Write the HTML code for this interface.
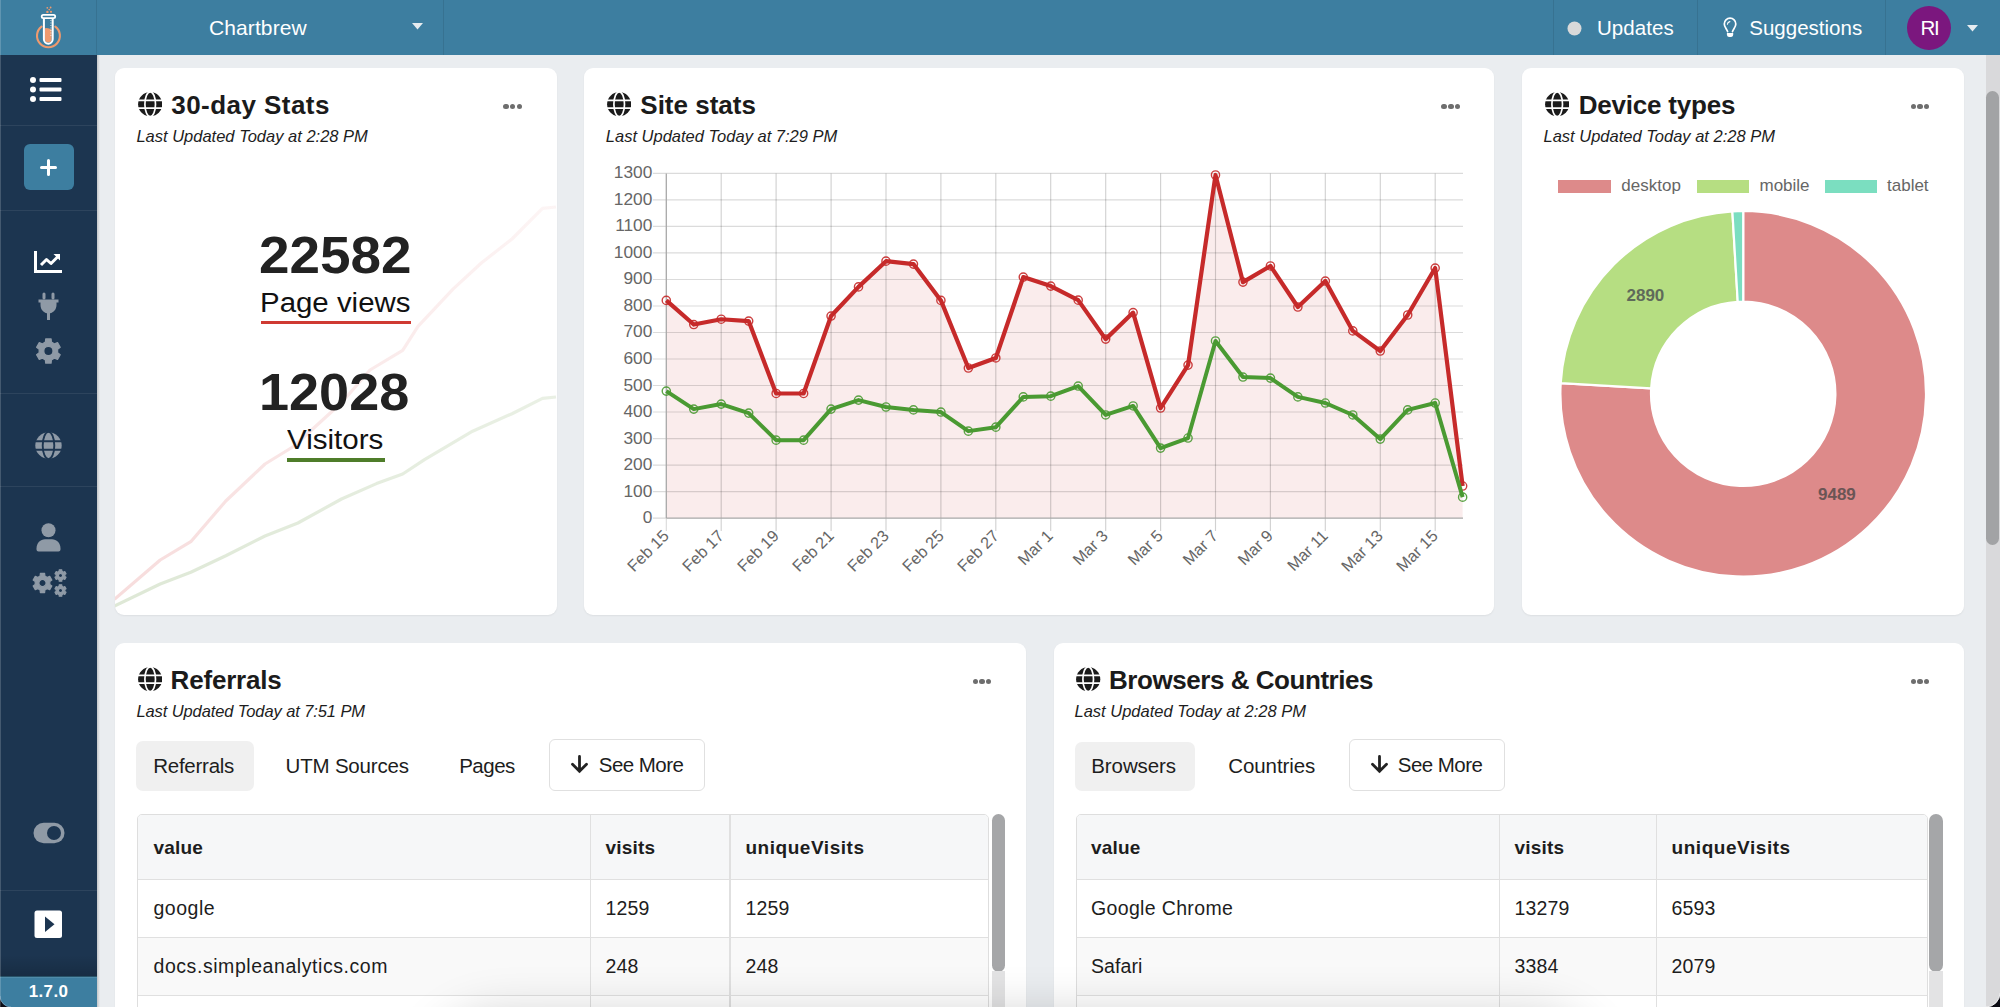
<!DOCTYPE html>
<html><head><meta charset="utf-8">
<style>
*{margin:0;padding:0;box-sizing:border-box}
html,body{width:2000px;height:1007px;overflow:hidden;background:#1e2a35}
body{font-family:"Liberation Sans",sans-serif;position:relative;color:#1a1a1a}
.a{position:absolute}
.t{position:absolute;line-height:1;white-space:nowrap}
#hdr{left:0;top:0;width:2000px;height:55px;background:#3d7ea0}
#hdr .dv{position:absolute;top:0;width:1px;height:55px;background:rgba(0,0,0,0.09)}
#side{left:0;top:55px;width:97px;height:952px;background:#1c3550;overflow:hidden}
#side .dv{position:absolute;left:0;width:97px;height:1px;background:rgba(255,255,255,0.08)}
#main{left:97px;top:55px;width:1889px;height:952px;background:#eaedf0}
.card{position:absolute;background:#fff;border-radius:9px;box-shadow:0 1px 2px rgba(0,0,0,0.06)}
.ttl{font-weight:bold;font-size:26px;color:#1b1b1b}
.upd{font-style:italic;font-size:16.5px;color:#1d1d1d}
.dots{position:absolute;width:18px;height:6px}
.dots i{position:absolute;top:0;width:5.5px;height:5.5px;border-radius:50%;background:#6e6e6e}
.ax{font-size:17px;color:#666}
.tab{position:absolute;height:50px;border-radius:7px}
.tabt{font-size:20.5px;color:#1d1d1d;letter-spacing:-0.4px}
.tbl{position:absolute;border:1px solid #dedede;border-radius:5px;overflow:hidden}
.th{font-weight:bold;font-size:19px;color:#1d1d1d;letter-spacing:0.2px}
.td{font-size:19.5px;color:#1d1d1d;letter-spacing:0.2px}
</style></head><body>
<div id="hdr" class="a">
<div class="dv" style="left:96px"></div>
<div class="dv" style="left:443px"></div>
<div class="dv" style="left:1553px"></div>
<div class="dv" style="left:1697px"></div>
<div class="dv" style="left:1885px"></div>
</div>
<svg class="a" style="left:0;top:0" width="97" height="55" viewBox="0 0 97 55">
<path d="M41.6 26.6 A11.45 11.45 0 1 0 55.3 26.6" fill="none" stroke="#ef9a6e" stroke-width="2.1" stroke-linecap="round"/>
<path d="M45 28.2 Q48.5 27.6 51.6 29.6 V39.3 A3.3 3.3 0 0 1 45 39.3 Z" fill="#ef9a6e"/>
<path d="M43.9 18.2 V39.3 A4.4 4.4 0 0 0 52.7 39.3 V18.2" fill="none" stroke="#fff" stroke-width="2"/>
<rect x="41.7" y="14.9" width="13.5" height="3.2" rx="1.6" fill="none" stroke="#fff" stroke-width="1.8"/>
<path d="M50.2 20.5H51.6M50.2 23H51.6M50.2 25.5H51.6M50.2 28H51.6M50.2 30.5H51.6M50.2 33H51.6M50.2 35.5H51.6" stroke="#fff" stroke-width="0.7" opacity="0.8"/>
<circle cx="47.4" cy="11.9" r="1.2" fill="#ef9a6e"/><circle cx="51" cy="11.8" r="1.1" fill="#ef9a6e"/><circle cx="49.2" cy="9.6" r="0.8" fill="#ef9a6e"/><circle cx="47.3" cy="7.8" r="0.9" fill="#ef9a6e"/><circle cx="50.6" cy="7.5" r="0.9" fill="#ef9a6e"/>
</svg>
<div class="t " style="left:209.0px;top:16.5px;font-size:21px;color:#fff;letter-spacing:0.1px">Chartbrew</div>
<svg class="a" style="left:412px;top:23px" width="11" height="7" viewBox="0 0 11 7"><path d="M0 0H11L5.5 6.5Z" fill="#e6ecf0"/></svg>
<svg class="a" style="left:1567px;top:20.5px" width="15" height="15"><circle cx="7.5" cy="7.5" r="7" fill="#d9d9d9"/></svg>
<div class="t " style="left:1597.0px;top:17.6px;font-size:20.5px;color:#fff;letter-spacing:0.05px">Updates</div>
<svg class="a" style="left:1720px;top:15px" width="20" height="24" viewBox="0 0 20 24"><path d="M7.6 16.6 C6.8 14 4.3 12.2 4.3 8.9 A5.75 5.75 0 0 1 15.8 8.9 C15.8 12.2 13.3 14 12.5 16.6" fill="none" stroke="#fff" stroke-width="1.7" stroke-linecap="round"/><path d="M7.4 9.3 A3 3 0 0 1 9.9 6.6" fill="none" stroke="#fff" stroke-width="1.1" stroke-linecap="round"/><path d="M6.9 18.1H13.2V19.8Q13.2 21.9 11.2 21.9H8.9Q6.9 21.9 6.9 19.8Z" fill="#fff"/></svg>
<div class="t " style="left:1749.3px;top:17.6px;font-size:20.5px;color:#fff;letter-spacing:0.0px">Suggestions</div>
<div class="a" style="left:1907px;top:5.5px;width:44.4px;height:44.4px;border-radius:50%;background:#7b177e"></div>
<div class="t " style="left:1913.5px;top:17.6px;font-size:20.5px;color:#fff;width:32px;text-align:center;letter-spacing:-1.2px">RI</div>
<svg class="a" style="left:1967px;top:24.5px" width="11" height="7" viewBox="0 0 11 7"><path d="M0 0H11L5.5 6.5Z" fill="#e6ecf0"/></svg>
<div id="side" class="a">
<div class="dv" style="top:70px"></div>
<div class="dv" style="top:155px"></div>
<div class="dv" style="top:338px"></div>
<div class="dv" style="top:431px"></div>
<div class="dv" style="top:835px"></div>
<div class="a" style="left:0;top:921px;width:97px;height:31px;background:#3d7ea0"></div>
<div class="t" style="left:0;top:928px;width:97px;text-align:center;font-size:17px;font-weight:bold;color:#fff;letter-spacing:0.3px">1.7.0</div>
</div>
<svg class="a" style="left:29px;top:76px" width="34" height="27" viewBox="0 0 34 27"><circle cx="4" cy="4" r="3" fill="#fff"/><circle cx="4" cy="13.5" r="3" fill="#fff"/><circle cx="4" cy="23" r="3" fill="#fff"/><rect x="10.5" y="2" width="22" height="4" rx="1" fill="#fff"/><rect x="10.5" y="11.5" width="22" height="4" rx="1" fill="#fff"/><rect x="10.5" y="21" width="22" height="4" rx="1" fill="#fff"/></svg>
<div class="a" style="left:23.5px;top:144px;width:50px;height:46px;border-radius:6px;background:#3d7ea0"></div>
<svg class="a" style="left:40px;top:158.5px" width="17" height="17"><path d="M8.5 1.5V15.5M1.5 8.5H15.5" stroke="#fff" stroke-width="3" stroke-linecap="round"/></svg>
<svg class="a" style="left:34px;top:251px" width="29" height="22" viewBox="0 0 29 22"><path d="M1.5 0V20.5H28" fill="none" stroke="#fff" stroke-width="3"/><path d="M7 14L12.5 8.5L17 12.5L24 5.5" fill="none" stroke="#fff" stroke-width="3" stroke-linejoin="round"/><path d="M19.5 3H26V9.5Z" fill="#fff"/></svg>
<svg class="a" style="left:38px;top:292px" width="21" height="29" viewBox="0 0 21 29"><rect x="4.5" y="0.5" width="3" height="7" rx="1.5" fill="#8f9aa6"/><rect x="13.5" y="0.5" width="3" height="7" rx="1.5" fill="#8f9aa6"/><path d="M0.5 7.5H20.5V10.5H18.5V13C18.5 17.5 15.5 20.5 12 21.3V28H9V21.3C5.5 20.5 2.5 17.5 2.5 13V10.5H0.5Z" fill="#8f9aa6"/></svg>
<svg class="a" style="left:0;top:0" width="97" height="1007"><path d="M45.70 338.90 L51.10 338.90 L51.42 342.07 L54.62 343.92 L57.53 342.61 L60.23 347.29 L57.64 349.15 L57.64 352.85 L60.23 354.71 L57.53 359.39 L54.62 358.08 L51.42 359.93 L51.10 363.10 L45.70 363.10 L45.38 359.93 L42.18 358.08 L39.27 359.39 L36.57 354.71 L39.16 352.85 L39.16 349.15 L36.57 347.29 L39.27 342.61 L42.18 343.92 L45.38 342.07Z M53.00 351.00 A4.6 4.6 0 1 0 43.80 351.00 A4.6 4.6 0 1 0 53.00 351.00Z" fill="#8f9aa6" fill-rule="evenodd" stroke="#8f9aa6" stroke-width="1.2" stroke-linejoin="round"/><path d="M40.36 573.44 L44.64 573.44 L44.88 575.94 L47.42 577.41 L49.71 576.37 L51.85 580.07 L49.80 581.54 L49.80 584.46 L51.85 585.93 L49.71 589.63 L47.42 588.59 L44.88 590.06 L44.64 592.56 L40.36 592.56 L40.12 590.06 L37.58 588.59 L35.29 589.63 L33.15 585.93 L35.20 584.46 L35.20 581.54 L33.15 580.07 L35.29 576.37 L37.58 577.41 L40.12 575.94Z M46.10 583.00 A3.6 3.6 0 1 0 38.90 583.00 A3.6 3.6 0 1 0 46.10 583.00Z" fill="#8f9aa6" fill-rule="evenodd" stroke="#8f9aa6" stroke-width="1.2" stroke-linejoin="round"/><path d="M59.23 569.84 L61.77 569.84 L61.91 571.32 L63.41 572.19 L64.77 571.57 L66.03 573.77 L64.82 574.63 L64.82 576.37 L66.03 577.23 L64.77 579.43 L63.41 578.81 L61.91 579.68 L61.77 581.16 L59.23 581.16 L59.09 579.68 L57.59 578.81 L56.23 579.43 L54.97 577.23 L56.18 576.37 L56.18 574.63 L54.97 573.77 L56.23 571.57 L57.59 572.19 L59.09 571.32Z M62.60 575.50 A2.1 2.1 0 1 0 58.40 575.50 A2.1 2.1 0 1 0 62.60 575.50Z" fill="#8f9aa6" fill-rule="evenodd" stroke="#8f9aa6" stroke-width="1.2" stroke-linejoin="round"/><path d="M59.23 584.84 L61.77 584.84 L61.91 586.32 L63.41 587.19 L64.77 586.57 L66.03 588.77 L64.82 589.63 L64.82 591.37 L66.03 592.23 L64.77 594.43 L63.41 593.81 L61.91 594.68 L61.77 596.16 L59.23 596.16 L59.09 594.68 L57.59 593.81 L56.23 594.43 L54.97 592.23 L56.18 591.37 L56.18 589.63 L54.97 588.77 L56.23 586.57 L57.59 587.19 L59.09 586.32Z M62.60 590.50 A2.1 2.1 0 1 0 58.40 590.50 A2.1 2.1 0 1 0 62.60 590.50Z" fill="#8f9aa6" fill-rule="evenodd" stroke="#8f9aa6" stroke-width="1.2" stroke-linejoin="round"/></svg>
<svg class="a" style="left:35px;top:432px" width="27" height="27" viewBox="-13.5 -13.5 27 27"><circle r="13.2" fill="#8f9aa6"/><ellipse rx="5.8" ry="13.6" fill="none" stroke="#1c3550" stroke-width="1.9"/><path d="M-14 -4.2H14M-14 4.2H14" stroke="#1c3550" stroke-width="1.9"/></svg>
<svg class="a" style="left:36px;top:523px" width="25" height="29" viewBox="0 0 25 29"><circle cx="12.5" cy="7.3" r="7" fill="#8f9aa6"/><path d="M0.5 25.5C0.5 20 4.5 16.3 9 16.3H16C20.5 16.3 24.5 20 24.5 25.5V26.5C24.5 27.6 23.6 28.5 22.5 28.5H2.5C1.4 28.5 0.5 27.6 0.5 26.5Z" fill="#8f9aa6"/></svg>
<svg class="a" style="left:33px;top:822px" width="32" height="22" viewBox="0 0 32 22"><rect x="0.5" y="0.8" width="31" height="20.4" rx="10.2" fill="#8f9aa6"/><circle cx="21" cy="11" r="7" fill="#1c3550"/></svg>
<svg class="a" style="left:34px;top:910px" width="29" height="29" viewBox="0 0 29 29"><rect x="0.5" y="0.5" width="27.5" height="27.5" rx="2.5" fill="#fff"/><path d="M11 6.5L20.5 14.2L11 22Z" fill="#1c3550"/></svg>
<div id="main" class="a"></div>
<div class="card" style="left:115px;top:68px;width:442px;height:547px"></div>
<div class="card" style="left:584px;top:68px;width:910px;height:547px"></div>
<div class="card" style="left:1522px;top:68px;width:442px;height:547px"></div>
<div class="card" style="left:115px;top:643px;width:911px;height:400px"></div>
<div class="card" style="left:1054px;top:643px;width:910px;height:400px"></div>
<div class="a" style="left:97px;top:55px;width:3px;height:952px;background:linear-gradient(90deg,rgba(0,0,0,0.17),rgba(0,0,0,0))"></div>
<div class="a" style="left:1986px;top:55px;width:14px;height:952px;background:#d9d9db"></div>
<div class="a" style="left:1986px;top:91px;width:13px;height:454px;background:#a2a3a5;border-radius:7px"></div>
<svg class="a" style="left:138px;top:92px" width="24.4" height="24.4" viewBox="-12.2 -12.2 24.4 24.4"><circle r="12.1" fill="#1b1b1b"/><ellipse rx="5.3" ry="12.4" fill="none" stroke="#fff" stroke-width="1.7"/><path d="M-13 -3.85H13M-13 3.85H13" stroke="#fff" stroke-width="1.7"/></svg>
<div class="t ttl" style="left:171.3px;top:91.9px;font-size:26px;letter-spacing:0.45px">30-day Stats</div>
<div class="dots" style="left:503.2px;top:103.7px"><i style="left:0"></i><i style="left:6.7px"></i><i style="left:13.4px"></i></div>
<div class="t upd" style="left:136.4px;top:128.2px;font-size:16.5px;">Last Updated Today at 2:28 PM</div>
<svg class="a" style="left:607px;top:92px" width="24.4" height="24.4" viewBox="-12.2 -12.2 24.4 24.4"><circle r="12.1" fill="#1b1b1b"/><ellipse rx="5.3" ry="12.4" fill="none" stroke="#fff" stroke-width="1.7"/><path d="M-13 -3.85H13M-13 3.85H13" stroke="#fff" stroke-width="1.7"/></svg>
<div class="t ttl" style="left:640.3px;top:91.9px;font-size:26px;">Site stats</div>
<div class="dots" style="left:1441.4px;top:103.7px"><i style="left:0"></i><i style="left:6.7px"></i><i style="left:13.4px"></i></div>
<div class="t upd" style="left:605.8px;top:128.2px;font-size:16.5px;">Last Updated Today at 7:29 PM</div>
<svg class="a" style="left:1545px;top:92px" width="24.4" height="24.4" viewBox="-12.2 -12.2 24.4 24.4"><circle r="12.1" fill="#1b1b1b"/><ellipse rx="5.3" ry="12.4" fill="none" stroke="#fff" stroke-width="1.7"/><path d="M-13 -3.85H13M-13 3.85H13" stroke="#fff" stroke-width="1.7"/></svg>
<div class="t ttl" style="left:1578.7px;top:91.9px;font-size:26px;letter-spacing:-0.2px">Device types</div>
<div class="dots" style="left:1910.5px;top:103.7px"><i style="left:0"></i><i style="left:6.7px"></i><i style="left:13.4px"></i></div>
<div class="t upd" style="left:1543.5px;top:128.2px;font-size:16.5px;">Last Updated Today at 2:28 PM</div>
<svg class="a" style="left:138px;top:667px" width="24.4" height="24.4" viewBox="-12.2 -12.2 24.4 24.4"><circle r="12.1" fill="#1b1b1b"/><ellipse rx="5.3" ry="12.4" fill="none" stroke="#fff" stroke-width="1.7"/><path d="M-13 -3.85H13M-13 3.85H13" stroke="#fff" stroke-width="1.7"/></svg>
<div class="t ttl" style="left:170.6px;top:667.3px;font-size:26px;letter-spacing:-0.2px">Referrals</div>
<div class="dots" style="left:972.5px;top:678.5px"><i style="left:0"></i><i style="left:6.7px"></i><i style="left:13.4px"></i></div>
<div class="t upd" style="left:136.4px;top:703.3px;font-size:16.5px;letter-spacing:-0.1px">Last Updated Today at 7:51 PM</div>
<svg class="a" style="left:1076.2px;top:667px" width="24.4" height="24.4" viewBox="-12.2 -12.2 24.4 24.4"><circle r="12.1" fill="#1b1b1b"/><ellipse rx="5.3" ry="12.4" fill="none" stroke="#fff" stroke-width="1.7"/><path d="M-13 -3.85H13M-13 3.85H13" stroke="#fff" stroke-width="1.7"/></svg>
<div class="t ttl" style="left:1109.0px;top:667.3px;font-size:26px;letter-spacing:-0.45px">Browsers &amp; Countries</div>
<div class="dots" style="left:1910.5px;top:678.5px"><i style="left:0"></i><i style="left:6.7px"></i><i style="left:13.4px"></i></div>
<div class="t upd" style="left:1074.5px;top:703.3px;font-size:16.5px;">Last Updated Today at 2:28 PM</div>
<svg class="a" style="left:0;top:0" width="2000" height="1007"><path d="M666.30 518.1 L666.30 300.41 L693.76 324.54 L721.22 319.23 L748.68 321.09 L776.14 393.48 L803.60 393.48 L831.06 316.05 L858.52 286.89 L885.98 261.17 L913.44 264.08 L940.90 300.41 L968.36 368.02 L995.82 357.95 L1023.28 277.08 L1050.74 286.09 L1078.20 300.14 L1105.66 339.12 L1133.12 312.61 L1160.58 408.06 L1188.04 365.11 L1215.50 174.99 L1242.96 282.11 L1270.42 265.94 L1297.88 307.04 L1325.34 281.05 L1352.80 330.90 L1380.26 351.05 L1407.72 314.99 L1435.18 268.06 L1462.64 486.02 L1462.64 518.1Z" fill="rgba(200,40,40,0.09)"/><path d="M653 491.6H1463 M653 465.1H1463 M653 438.6H1463 M653 412.0H1463 M653 385.5H1463 M653 359.0H1463 M653 332.5H1463 M653 306.0H1463 M653 279.5H1463 M653 252.9H1463 M653 226.4H1463 M653 199.9H1463 M653 173.4H1463" stroke="rgba(0,0,0,0.14)" stroke-width="1.15" fill="none"/><path d="M721.2 173.4V531 M776.1 173.4V531 M831.1 173.4V531 M886.0 173.4V531 M940.9 173.4V531 M995.8 173.4V531 M1050.7 173.4V531 M1105.7 173.4V531 M1160.6 173.4V531 M1215.5 173.4V531 M1270.4 173.4V531 M1325.3 173.4V531 M1380.3 173.4V531 M1435.2 173.4V531" stroke="rgba(0,0,0,0.18)" stroke-width="1.15" fill="none"/><path d="M653 518.1H666.3M666.3 518.1V531" stroke="#dadada" stroke-width="1.1" fill="none"/><path d="M666.3 518.1H1463M666.3 173.4V518.1" stroke="#a8a8a8" stroke-width="1.3" fill="none"/><path d="M666.30 300.41 L693.76 324.54 L721.22 319.23 L748.68 321.09 L776.14 393.48 L803.60 393.48 L831.06 316.05 L858.52 286.89 L885.98 261.17 L913.44 264.08 L940.90 300.41 L968.36 368.02 L995.82 357.95 L1023.28 277.08 L1050.74 286.09 L1078.20 300.14 L1105.66 339.12 L1133.12 312.61 L1160.58 408.06 L1188.04 365.11 L1215.50 174.99 L1242.96 282.11 L1270.42 265.94 L1297.88 307.04 L1325.34 281.05 L1352.80 330.90 L1380.26 351.05 L1407.72 314.99 L1435.18 268.06 L1462.64 486.02" stroke="#c62a2a" stroke-width="4.2" fill="none" stroke-linejoin="round"/><g fill="none" stroke="#c62a2a" stroke-width="1.4" opacity="0.9"><circle cx="666.30" cy="300.41" r="4.1"/><circle cx="693.76" cy="324.54" r="4.1"/><circle cx="721.22" cy="319.23" r="4.1"/><circle cx="748.68" cy="321.09" r="4.1"/><circle cx="776.14" cy="393.48" r="4.1"/><circle cx="803.60" cy="393.48" r="4.1"/><circle cx="831.06" cy="316.05" r="4.1"/><circle cx="858.52" cy="286.89" r="4.1"/><circle cx="885.98" cy="261.17" r="4.1"/><circle cx="913.44" cy="264.08" r="4.1"/><circle cx="940.90" cy="300.41" r="4.1"/><circle cx="968.36" cy="368.02" r="4.1"/><circle cx="995.82" cy="357.95" r="4.1"/><circle cx="1023.28" cy="277.08" r="4.1"/><circle cx="1050.74" cy="286.09" r="4.1"/><circle cx="1078.20" cy="300.14" r="4.1"/><circle cx="1105.66" cy="339.12" r="4.1"/><circle cx="1133.12" cy="312.61" r="4.1"/><circle cx="1160.58" cy="408.06" r="4.1"/><circle cx="1188.04" cy="365.11" r="4.1"/><circle cx="1215.50" cy="174.99" r="4.1"/><circle cx="1242.96" cy="282.11" r="4.1"/><circle cx="1270.42" cy="265.94" r="4.1"/><circle cx="1297.88" cy="307.04" r="4.1"/><circle cx="1325.34" cy="281.05" r="4.1"/><circle cx="1352.80" cy="330.90" r="4.1"/><circle cx="1380.26" cy="351.05" r="4.1"/><circle cx="1407.72" cy="314.99" r="4.1"/><circle cx="1435.18" cy="268.06" r="4.1"/><circle cx="1462.64" cy="486.02" r="4.1"/></g><path d="M666.30 391.09 L693.76 409.12 L721.22 404.08 L748.68 413.10 L776.14 440.14 L803.60 440.14 L831.06 409.12 L858.52 400.11 L885.98 407.00 L913.44 409.92 L940.90 412.04 L968.36 431.13 L995.82 427.15 L1023.28 396.92 L1050.74 396.13 L1078.20 386.05 L1105.66 414.96 L1133.12 405.94 L1160.58 448.10 L1188.04 438.02 L1215.50 340.98 L1242.96 377.04 L1270.42 378.10 L1297.88 396.92 L1325.34 403.02 L1352.80 414.96 L1380.26 439.08 L1407.72 409.92 L1435.18 403.02 L1462.64 497.15" stroke="#4a9a32" stroke-width="4.0" fill="none" stroke-linejoin="round"/><g fill="none" stroke="#4a9a32" stroke-width="1.4" opacity="0.9"><circle cx="666.30" cy="391.09" r="4.1"/><circle cx="693.76" cy="409.12" r="4.1"/><circle cx="721.22" cy="404.08" r="4.1"/><circle cx="748.68" cy="413.10" r="4.1"/><circle cx="776.14" cy="440.14" r="4.1"/><circle cx="803.60" cy="440.14" r="4.1"/><circle cx="831.06" cy="409.12" r="4.1"/><circle cx="858.52" cy="400.11" r="4.1"/><circle cx="885.98" cy="407.00" r="4.1"/><circle cx="913.44" cy="409.92" r="4.1"/><circle cx="940.90" cy="412.04" r="4.1"/><circle cx="968.36" cy="431.13" r="4.1"/><circle cx="995.82" cy="427.15" r="4.1"/><circle cx="1023.28" cy="396.92" r="4.1"/><circle cx="1050.74" cy="396.13" r="4.1"/><circle cx="1078.20" cy="386.05" r="4.1"/><circle cx="1105.66" cy="414.96" r="4.1"/><circle cx="1133.12" cy="405.94" r="4.1"/><circle cx="1160.58" cy="448.10" r="4.1"/><circle cx="1188.04" cy="438.02" r="4.1"/><circle cx="1215.50" cy="340.98" r="4.1"/><circle cx="1242.96" cy="377.04" r="4.1"/><circle cx="1270.42" cy="378.10" r="4.1"/><circle cx="1297.88" cy="396.92" r="4.1"/><circle cx="1325.34" cy="403.02" r="4.1"/><circle cx="1352.80" cy="414.96" r="4.1"/><circle cx="1380.26" cy="439.08" r="4.1"/><circle cx="1407.72" cy="409.92" r="4.1"/><circle cx="1435.18" cy="403.02" r="4.1"/><circle cx="1462.64" cy="497.15" r="4.1"/></g></svg>
<div class="t ax" style="left:600.0px;top:509.0px;font-size:17.3px;width:52.3px;text-align:right">0</div>
<div class="t ax" style="left:600.0px;top:482.5px;font-size:17.3px;width:52.3px;text-align:right">100</div>
<div class="t ax" style="left:600.0px;top:456.0px;font-size:17.3px;width:52.3px;text-align:right">200</div>
<div class="t ax" style="left:600.0px;top:429.5px;font-size:17.3px;width:52.3px;text-align:right">300</div>
<div class="t ax" style="left:600.0px;top:403.0px;font-size:17.3px;width:52.3px;text-align:right">400</div>
<div class="t ax" style="left:600.0px;top:376.5px;font-size:17.3px;width:52.3px;text-align:right">500</div>
<div class="t ax" style="left:600.0px;top:350.0px;font-size:17.3px;width:52.3px;text-align:right">600</div>
<div class="t ax" style="left:600.0px;top:323.4px;font-size:17.3px;width:52.3px;text-align:right">700</div>
<div class="t ax" style="left:600.0px;top:296.9px;font-size:17.3px;width:52.3px;text-align:right">800</div>
<div class="t ax" style="left:600.0px;top:270.4px;font-size:17.3px;width:52.3px;text-align:right">900</div>
<div class="t ax" style="left:600.0px;top:243.9px;font-size:17.3px;width:52.3px;text-align:right">1000</div>
<div class="t ax" style="left:600.0px;top:217.4px;font-size:17.3px;width:52.3px;text-align:right">1100</div>
<div class="t ax" style="left:600.0px;top:190.9px;font-size:17.3px;width:52.3px;text-align:right">1200</div>
<div class="t ax" style="left:600.0px;top:164.3px;font-size:17.3px;width:52.3px;text-align:right">1300</div>
<div class="t ax" style="font-size:16.3px;left:460.0px;top:527.2px;width:200px;text-align:right;transform-origin:100% 0;transform:rotate(-45deg) translate(0px,0px)">Feb 15</div>
<div class="t ax" style="font-size:16.3px;left:514.9px;top:527.2px;width:200px;text-align:right;transform-origin:100% 0;transform:rotate(-45deg) translate(0px,0px)">Feb 17</div>
<div class="t ax" style="font-size:16.3px;left:569.8px;top:527.2px;width:200px;text-align:right;transform-origin:100% 0;transform:rotate(-45deg) translate(0px,0px)">Feb 19</div>
<div class="t ax" style="font-size:16.3px;left:624.8px;top:527.2px;width:200px;text-align:right;transform-origin:100% 0;transform:rotate(-45deg) translate(0px,0px)">Feb 21</div>
<div class="t ax" style="font-size:16.3px;left:679.7px;top:527.2px;width:200px;text-align:right;transform-origin:100% 0;transform:rotate(-45deg) translate(0px,0px)">Feb 23</div>
<div class="t ax" style="font-size:16.3px;left:734.6px;top:527.2px;width:200px;text-align:right;transform-origin:100% 0;transform:rotate(-45deg) translate(0px,0px)">Feb 25</div>
<div class="t ax" style="font-size:16.3px;left:789.5px;top:527.2px;width:200px;text-align:right;transform-origin:100% 0;transform:rotate(-45deg) translate(0px,0px)">Feb 27</div>
<div class="t ax" style="font-size:16.3px;left:844.4px;top:527.2px;width:200px;text-align:right;transform-origin:100% 0;transform:rotate(-45deg) translate(0px,0px)">Mar 1</div>
<div class="t ax" style="font-size:16.3px;left:899.4px;top:527.2px;width:200px;text-align:right;transform-origin:100% 0;transform:rotate(-45deg) translate(0px,0px)">Mar 3</div>
<div class="t ax" style="font-size:16.3px;left:954.3px;top:527.2px;width:200px;text-align:right;transform-origin:100% 0;transform:rotate(-45deg) translate(0px,0px)">Mar 5</div>
<div class="t ax" style="font-size:16.3px;left:1009.2px;top:527.2px;width:200px;text-align:right;transform-origin:100% 0;transform:rotate(-45deg) translate(0px,0px)">Mar 7</div>
<div class="t ax" style="font-size:16.3px;left:1064.1px;top:527.2px;width:200px;text-align:right;transform-origin:100% 0;transform:rotate(-45deg) translate(0px,0px)">Mar 9</div>
<div class="t ax" style="font-size:16.3px;left:1119.0px;top:527.2px;width:200px;text-align:right;transform-origin:100% 0;transform:rotate(-45deg) translate(0px,0px)">Mar 11</div>
<div class="t ax" style="font-size:16.3px;left:1174.0px;top:527.2px;width:200px;text-align:right;transform-origin:100% 0;transform:rotate(-45deg) translate(0px,0px)">Mar 13</div>
<div class="t ax" style="font-size:16.3px;left:1228.9px;top:527.2px;width:200px;text-align:right;transform-origin:100% 0;transform:rotate(-45deg) translate(0px,0px)">Mar 15</div>
<svg class="a" style="left:0;top:0" width="2000" height="1007"><path d="M1743.20 211.00A182.8 182.8 0 1 1 1560.71 383.12L1651.16 388.41A92.2 92.2 0 1 0 1743.20 301.60Z" fill="#dd8a8a" stroke="#fff" stroke-width="2.2" stroke-linejoin="round"/><path d="M1560.71 383.12A182.8 182.8 0 0 1 1732.36 211.32L1737.73 301.76A92.2 92.2 0 0 0 1651.16 388.41Z" fill="#b6de82" stroke="#fff" stroke-width="2.2" stroke-linejoin="round"/><path d="M1732.36 211.32A182.8 182.8 0 0 1 1743.20 211.00L1743.20 301.60A92.2 92.2 0 0 0 1737.73 301.76Z" fill="#7bdec0" stroke="#fff" stroke-width="2.2" stroke-linejoin="round"/></svg>
<div class="t " style="left:1626.5px;top:287.1px;font-size:17px;font-weight:bold;color:#5f6a5a">2890</div>
<div class="t " style="left:1818.0px;top:485.6px;font-size:17px;font-weight:bold;color:#6b5555">9489</div>
<div class="a" style="left:1558.3px;top:179.5px;width:52.5px;height:13.2px;background:#dd8a8a"></div>
<div class="a" style="left:1696.5px;top:179.5px;width:52.5px;height:13.2px;background:#b6de82"></div>
<div class="a" style="left:1824.5px;top:179.5px;width:52.5px;height:13.2px;background:#7bdec0"></div>
<div class="t ax" style="left:1621.3px;top:177.1px;font-size:17px;">desktop</div>
<div class="t ax" style="left:1759.5px;top:177.1px;font-size:17px;">mobile</div>
<div class="t ax" style="left:1887.0px;top:177.1px;font-size:17px;">tablet</div>
<svg class="a" style="left:0;top:0" width="2000" height="1007"><defs><clipPath id="c1"><rect x="115" y="68" width="442" height="547" rx="9"/></clipPath></defs><linearGradient id="gr" gradientUnits="userSpaceOnUse" x1="0" y1="600" x2="0" y2="207"><stop offset="0" stop-color="rgb(215,80,80)" stop-opacity="0.2"/><stop offset="1" stop-color="rgb(215,80,80)" stop-opacity="0.06"/></linearGradient><linearGradient id="gg" gradientUnits="userSpaceOnUse" x1="0" y1="606" x2="0" y2="397"><stop offset="0" stop-color="rgb(90,140,50)" stop-opacity="0.2"/><stop offset="1" stop-color="rgb(90,140,50)" stop-opacity="0.13"/></linearGradient><g clip-path="url(#c1)" fill="none" stroke-width="3.2" stroke-linejoin="round"><path d="M114.4 599.4 L160.2 560.0 L190.8 541.7 L225.8 501.0 L265.0 464.0 L293.5 446.5 L341.5 402.8 L370.0 370.0 L402.7 350.4 L418.0 326.4 L453.0 289.2 L481.3 263.0 L512.0 239.0 L542.5 208.4 L556.0 207.0" stroke="url(#gr)"/><path d="M114.4 606.0 L160.2 584.0 L190.8 572.3 L225.8 555.7 L265.0 536.0 L297.9 523.0 L341.5 499.0 L376.5 483.6 L402.7 474.0 L424.5 459.6 L472.6 431.2 L512.0 413.7 L542.5 398.4 L556.0 397.0" stroke="url(#gg)"/></g></svg>
<div class="t " style="left:258.9px;top:230.1px;font-size:51.6px;font-weight:bold;color:#222;transform-origin:0 0;transform:scaleX(1.063)">22582</div>
<div class="t " style="left:260.3px;top:290.1px;font-size:27px;color:#111;transform-origin:0 0;transform:scaleX(1.09)">Page views</div>
<div class="a" style="left:261px;top:320.5px;width:150px;height:3.8px;background:#cf3a32"></div>
<div class="t " style="left:259.0px;top:367.1px;font-size:51.6px;font-weight:bold;color:#222;transform-origin:0 0;transform:scaleX(1.047)">12028</div>
<div class="t " style="left:287.3px;top:426.6px;font-size:27px;color:#111;transform-origin:0 0;transform:scaleX(1.095)">Visitors</div>
<div class="a" style="left:287px;top:458.2px;width:97.5px;height:3.8px;background:#4f7d2a"></div>
<div class="a" style="left:135.9px;top:741.3px;width:118px;height:49.5px;background:#f0f0f0;border-radius:7px"></div>
<div class="t tabt" style="left:153.2px;top:756.1px;font-size:20.5px;letter-spacing:-0.25px">Referrals</div>
<div class="t tabt" style="left:285.6px;top:756.1px;font-size:20.5px;letter-spacing:-0.2px">UTM Sources</div>
<div class="t tabt" style="left:459.2px;top:756.1px;font-size:20.5px;letter-spacing:-0.5px">Pages</div>
<div class="a" style="left:548.8px;top:738.8px;width:156px;height:51.8px;border:1.6px solid #e0e0e0;border-radius:6px;background:#fff"></div>
<svg class="a" style="left:570px;top:755px" width="20" height="20" viewBox="0 0 20 20"><path d="M9.5 1.5V16.5M2.5 9.3L9.5 16.3L16.5 9.3" fill="none" stroke="#222" stroke-width="2.8" stroke-linecap="round" stroke-linejoin="miter"/></svg>
<div class="t tabt" style="left:598.8px;top:755.4px;font-size:20.5px;letter-spacing:-0.55px">See More</div>
<div class="a" style="left:1075.1px;top:741.5px;width:120.2px;height:49px;background:#f0f0f0;border-radius:7px"></div>
<div class="t tabt" style="left:1091.3px;top:756.1px;font-size:20.5px;letter-spacing:-0.1px">Browsers</div>
<div class="t tabt" style="left:1228.3px;top:756.1px;font-size:20.5px;letter-spacing:-0.1px">Countries</div>
<div class="a" style="left:1348.8px;top:738.8px;width:156px;height:51.8px;border:1.6px solid #e0e0e0;border-radius:6px;background:#fff"></div>
<svg class="a" style="left:1369.8px;top:755px" width="20" height="20" viewBox="0 0 20 20"><path d="M9.5 1.5V16.5M2.5 9.3L9.5 16.3L16.5 9.3" fill="none" stroke="#222" stroke-width="2.8" stroke-linecap="round" stroke-linejoin="miter"/></svg>
<div class="t tabt" style="left:1397.8px;top:755.4px;font-size:20.5px;letter-spacing:-0.55px">See More</div>
<div class="tbl" style="left:137px;top:814px;width:852px;height:260px;background:#fff">
<div class="a" style="left:0;top:0;width:100%;height:64px;background:#f6f7f8"></div>
<div class="a" style="left:0;top:122px;width:100%;height:58px;background:#f9f9f9"></div>
<div class="a" style="left:0;top:63.5px;width:100%;height:1.2px;background:#e0e0e0"></div>
<div class="a" style="left:0;top:121.7px;width:100%;height:1.2px;background:#e0e0e0"></div>
<div class="a" style="left:0;top:179.7px;width:100%;height:1.2px;background:#e0e0e0"></div>
<div class="a" style="left:451.5px;top:0;width:1.2px;height:100%;background:#e0e0e0"></div>
<div class="a" style="left:591.4px;top:0;width:1.2px;height:100%;background:#e0e0e0"></div>
</div>
<div class="t th" style="left:153.5px;top:838.1px;font-size:19px;">value</div>
<div class="t th" style="left:605.5px;top:838.1px;font-size:19px;">visits</div>
<div class="t th" style="left:745.4px;top:838.1px;font-size:19px;letter-spacing:0.55px">uniqueVisits</div>
<div class="t td" style="left:153.5px;top:898.7px;font-size:19.5px;letter-spacing:0.5px">google</div>
<div class="t td" style="left:605.5px;top:898.7px;font-size:19.5px;letter-spacing:0.15px">1259</div>
<div class="t td" style="left:745.4px;top:898.7px;font-size:19.5px;letter-spacing:0.15px">1259</div>
<div class="t td" style="left:153.5px;top:956.7px;font-size:19.5px;letter-spacing:0.56px">docs.simpleanalytics.com</div>
<div class="t td" style="left:605.5px;top:956.7px;font-size:19.5px;letter-spacing:0.15px">248</div>
<div class="t td" style="left:745.4px;top:956.7px;font-size:19.5px;letter-spacing:0.15px">248</div>
<div class="a" style="left:991.5px;top:814.2px;width:13.5px;height:157.5px;background:#a5a6a8;border-radius:7px"></div>
<div class="a" style="left:991.5px;top:971px;width:13.5px;height:40px;background:#e3e3e4"></div>
<div class="tbl" style="left:1075.5px;top:814px;width:852.2px;height:260px;background:#fff">
<div class="a" style="left:0;top:0;width:100%;height:64px;background:#f6f7f8"></div>
<div class="a" style="left:0;top:122px;width:100%;height:58px;background:#f9f9f9"></div>
<div class="a" style="left:0;top:63.5px;width:100%;height:1.2px;background:#e0e0e0"></div>
<div class="a" style="left:0;top:121.7px;width:100%;height:1.2px;background:#e0e0e0"></div>
<div class="a" style="left:0;top:179.7px;width:100%;height:1.2px;background:#e0e0e0"></div>
<div class="a" style="left:422.79999999999995px;top:0;width:1.2px;height:100%;background:#e0e0e0"></div>
<div class="a" style="left:579.8px;top:0;width:1.2px;height:100%;background:#e0e0e0"></div>
</div>
<div class="t th" style="left:1091.0px;top:838.1px;font-size:19px;">value</div>
<div class="t th" style="left:1514.5px;top:838.1px;font-size:19px;">visits</div>
<div class="t th" style="left:1671.5px;top:838.1px;font-size:19px;letter-spacing:0.55px">uniqueVisits</div>
<div class="t td" style="left:1091.0px;top:898.7px;font-size:19.5px;letter-spacing:0.35px">Google Chrome</div>
<div class="t td" style="left:1514.5px;top:898.7px;font-size:19.5px;letter-spacing:0.15px">13279</div>
<div class="t td" style="left:1671.5px;top:898.7px;font-size:19.5px;letter-spacing:0.15px">6593</div>
<div class="t td" style="left:1091.0px;top:956.7px;font-size:19.5px;letter-spacing:0.1px">Safari</div>
<div class="t td" style="left:1514.5px;top:956.7px;font-size:19.5px;letter-spacing:0.15px">3384</div>
<div class="t td" style="left:1671.5px;top:956.7px;font-size:19.5px;letter-spacing:0.15px">2079</div>
<div class="a" style="left:1929.3px;top:814.2px;width:13.5px;height:157.5px;background:#a5a6a8;border-radius:7px"></div>
<div class="a" style="left:1929.3px;top:971px;width:13.5px;height:40px;background:#e3e3e4"></div>
<div class="a" style="left:0;top:0;width:2000px;height:1007px;overflow:hidden;pointer-events:none"><div class="a" style="left:440px;top:1025px;width:1150px;height:200px;border-radius:60px;box-shadow:0 0 50px 10px rgba(0,0,0,0.2)"></div></div>
<div class="a" style="left:0px;top:955px;width:97px;height:21px;background:linear-gradient(rgba(0,0,0,0),rgba(0,0,0,0.16))"></div>
<div class="a" style="left:0px;top:975.5px;width:97px;height:1px;background:rgba(0,0,0,0.35)"></div>
<div class="a" style="left:0px;top:976.5px;width:97px;height:1px;background:rgba(255,255,255,0.1)"></div>
<svg class="a" style="left:0;top:0" width="2000" height="1007"><path d="M0 996 A11 11 0 0 0 11 1007 L0 1007Z" fill="#0c0c14"/><path d="M0 996 A11 11 0 0 0 11 1007" fill="none" stroke="rgba(160,200,230,0.55)" stroke-width="1"/><path d="M2000 993 A14 14 0 0 1 1986 1007 L2000 1007Z" fill="#0c0c14"/><path d="M2000 993 A14 14 0 0 1 1986 1007" fill="none" stroke="rgba(255,255,255,0.8)" stroke-width="1"/><rect x="0" y="0" width="1" height="1007" fill="rgba(255,255,255,0.18)"/></svg>
</body></html>
